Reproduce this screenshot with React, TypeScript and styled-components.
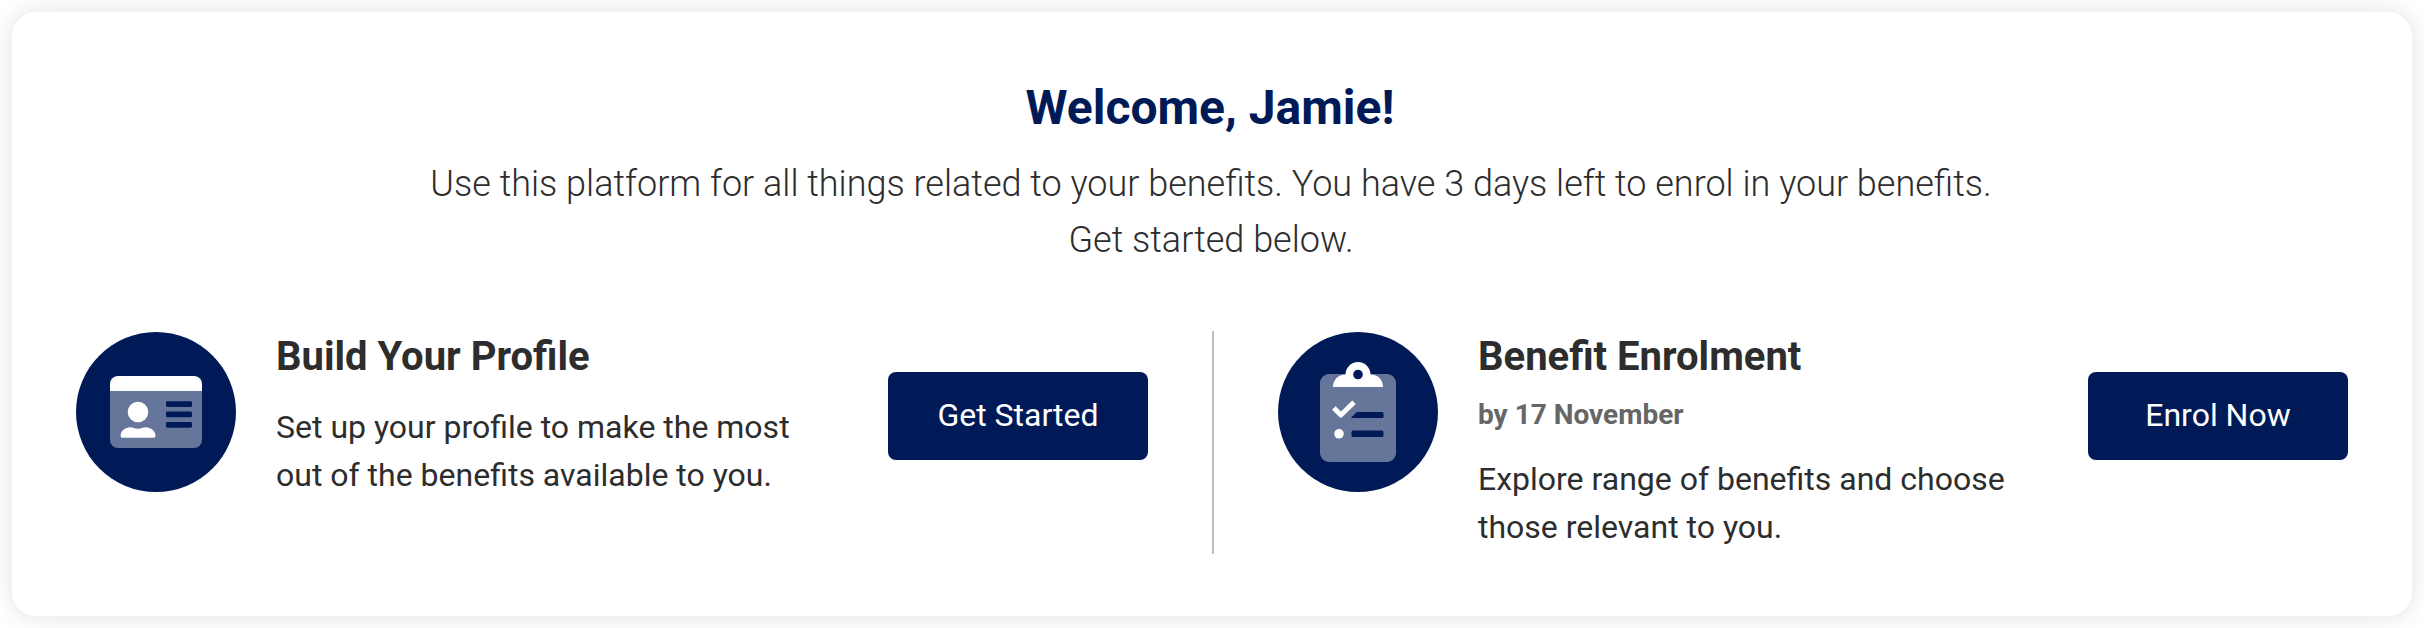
import React from "react";
import styled, { createGlobalStyle } from "styled-components";

const NAVY = "#001a58";
const TINT = "#66769b";

const GlobalStyle = createGlobalStyle`
  *, *::before, *::after { box-sizing: border-box; }
  body {
    margin: 0;
    background: #fff;
    color: #2d2d2d;
    font-family: Roboto, "Liberation Sans", sans-serif;
  }
  h1, h2, p { margin: 0; }
`;

const Page = styled.main`
  padding: 12px;
  height: 628px;
  overflow: hidden;
`;

const Card = styled.section`
  height: 604px;
  padding: 68px 64px 0;
  background: #fff;
  border-radius: 24px;
  box-shadow: 0 0 24px rgba(0, 0, 0, 0.12);
`;

const Title = styled.h1`
  padding-right: 4px;
  color: ${NAVY};
  font-size: 48px;
  font-weight: 700;
  line-height: 56px;
  text-align: center;
`;

const Intro = styled.p`
  width: 1620px;
  margin: 20px auto 63px;
  padding-right: 2px;
  font-size: 36px;
  font-weight: 300;
  line-height: 56px;
  text-align: center;
`;

const Tasks = styled.div`
  display: grid;
  grid-template-columns: 1fr 1fr;
  height: 223px;
`;

const Task = styled.article<{ $divided?: boolean }>`
  display: flex;
  align-items: flex-start;
  padding: 1px ${(p) => (p.$divided ? "0 0 64px" : "64px 0 0")};
  border-left: ${(p) => (p.$divided ? "2px solid #bdbdbd" : "none")};
`;

const Badge = styled.svg`
  flex: none;
  width: 160px;
  height: 160px;
  margin-right: 40px;
`;

const TaskBody = styled.div`
  width: 540px;
`;

const TaskTitle = styled.h2`
  font-size: 40px;
  font-weight: 700;
  line-height: 49px;
`;

const DueDate = styled.p`
  margin-top: 12px;
  color: #666;
  font-size: 28px;
  font-weight: 700;
  line-height: 43px;
`;

const Description = styled.p<{ $tight?: boolean }>`
  margin-top: ${(p) => (p.$tight ? 19 : 22)}px;
  font-size: 32px;
  line-height: 48px;
`;

const ActionButton = styled.button`
  flex: none;
  width: 260px;
  height: 88px;
  margin: 40px 0 0 auto;
  padding: 0 0 2px;
  border: 0;
  border-radius: 8px;
  background: ${NAVY};
  color: #fff;
  font: 400 32px/48px Roboto, "Liberation Sans", sans-serif;
`;

const ProfileIcon = () => (
  <Badge viewBox="0 0 160 160" aria-hidden="true">
    <circle cx="80" cy="80" r="80" fill={NAVY} />
    <path d="M34 59h92v49a8 8 0 0 1-8 8H42a8 8 0 0 1-8-8z" fill={TINT} />
    <path d="M42 44h76a8 8 0 0 1 8 8v7H34v-7a8 8 0 0 1 8-8z" fill="#fff" />
    <circle cx="62" cy="80" r="10.3" fill="#fff" />
    <path
      d="M54.5 95.3c2.6 0 3.8 1.5 7.5 1.5s4.9-1.5 7.5-1.5c5.500 0 10 4.200 10 8.200 0 1.500-.8 2.300-2.200 2.300H46.800c-1.400 0-2.200-.8-2.200-2.300 0-4 4.400-8.200 9.900-8.200z"
      fill="#fff"
    />
    <g fill={NAVY}>
      <rect x="90" y="69.2" width="26" height="5.8" rx="1.4" />
      <rect x="90" y="79.5" width="26" height="5.8" rx="1.4" />
      <rect x="90" y="89.9" width="26" height="5.8" rx="1.4" />
    </g>
  </Badge>
);

const ChecklistIcon = () => (
  <Badge viewBox="0 0 160 160" aria-hidden="true">
    <circle cx="80" cy="80" r="80" fill={NAVY} />
    <rect x="42" y="42" width="76" height="88" rx="9" fill={TINT} />
    <path
      d="M55 55c0-7.200 5.300-12.500 12.500-12.500A12.500 12.500 0 0 1 92.500 42.500C100 42.500 105 47.800 105 55z"
      fill="#fff"
    />
    <circle cx="80" cy="42.5" r="4.8" fill={NAVY} />
    <path d="M78.800 80H104q1.600 0 1.600 1.600v2.800q0 1.600-1.600 1.600H72.800z" fill={NAVY} />
    <rect x="73.5" y="98.5" width="32" height="6.5" rx="1.6" fill={NAVY} />
    <path
      d="M57.600 77.800 62.900 83 74.200 72"
      fill="none"
      stroke="#fff"
      strokeWidth="5"
      strokeLinecap="square"
      strokeLinejoin="round"
    />
    <circle cx="61" cy="101.8" r="4.8" fill="#fff" />
  </Badge>
);

export default function App() {
  return (
    <>
      <GlobalStyle />
      <Page>
        <Card>
          <Title>Welcome, Jamie!</Title>
          <Intro>
            Use this platform for all things related to your benefits. You have 3 days left to enrol in your benefits.
            <br />
            Get started below.
          </Intro>
          <Tasks>
            <Task>
              <ProfileIcon />
              <TaskBody>
                <TaskTitle>Build Your Profile</TaskTitle>
                <Description>
                  Set up your profile to make the most out of the benefits available to you.
                </Description>
              </TaskBody>
              <ActionButton type="button">Get Started</ActionButton>
            </Task>
            <Task $divided>
              <ChecklistIcon />
              <TaskBody>
                <TaskTitle>Benefit Enrolment</TaskTitle>
                <DueDate>by 17 November</DueDate>
                <Description $tight>
                  Explore range of benefits and choose those relevant to you.
                </Description>
              </TaskBody>
              <ActionButton type="button">Enrol Now</ActionButton>
            </Task>
          </Tasks>
        </Card>
      </Page>
    </>
  );
}
